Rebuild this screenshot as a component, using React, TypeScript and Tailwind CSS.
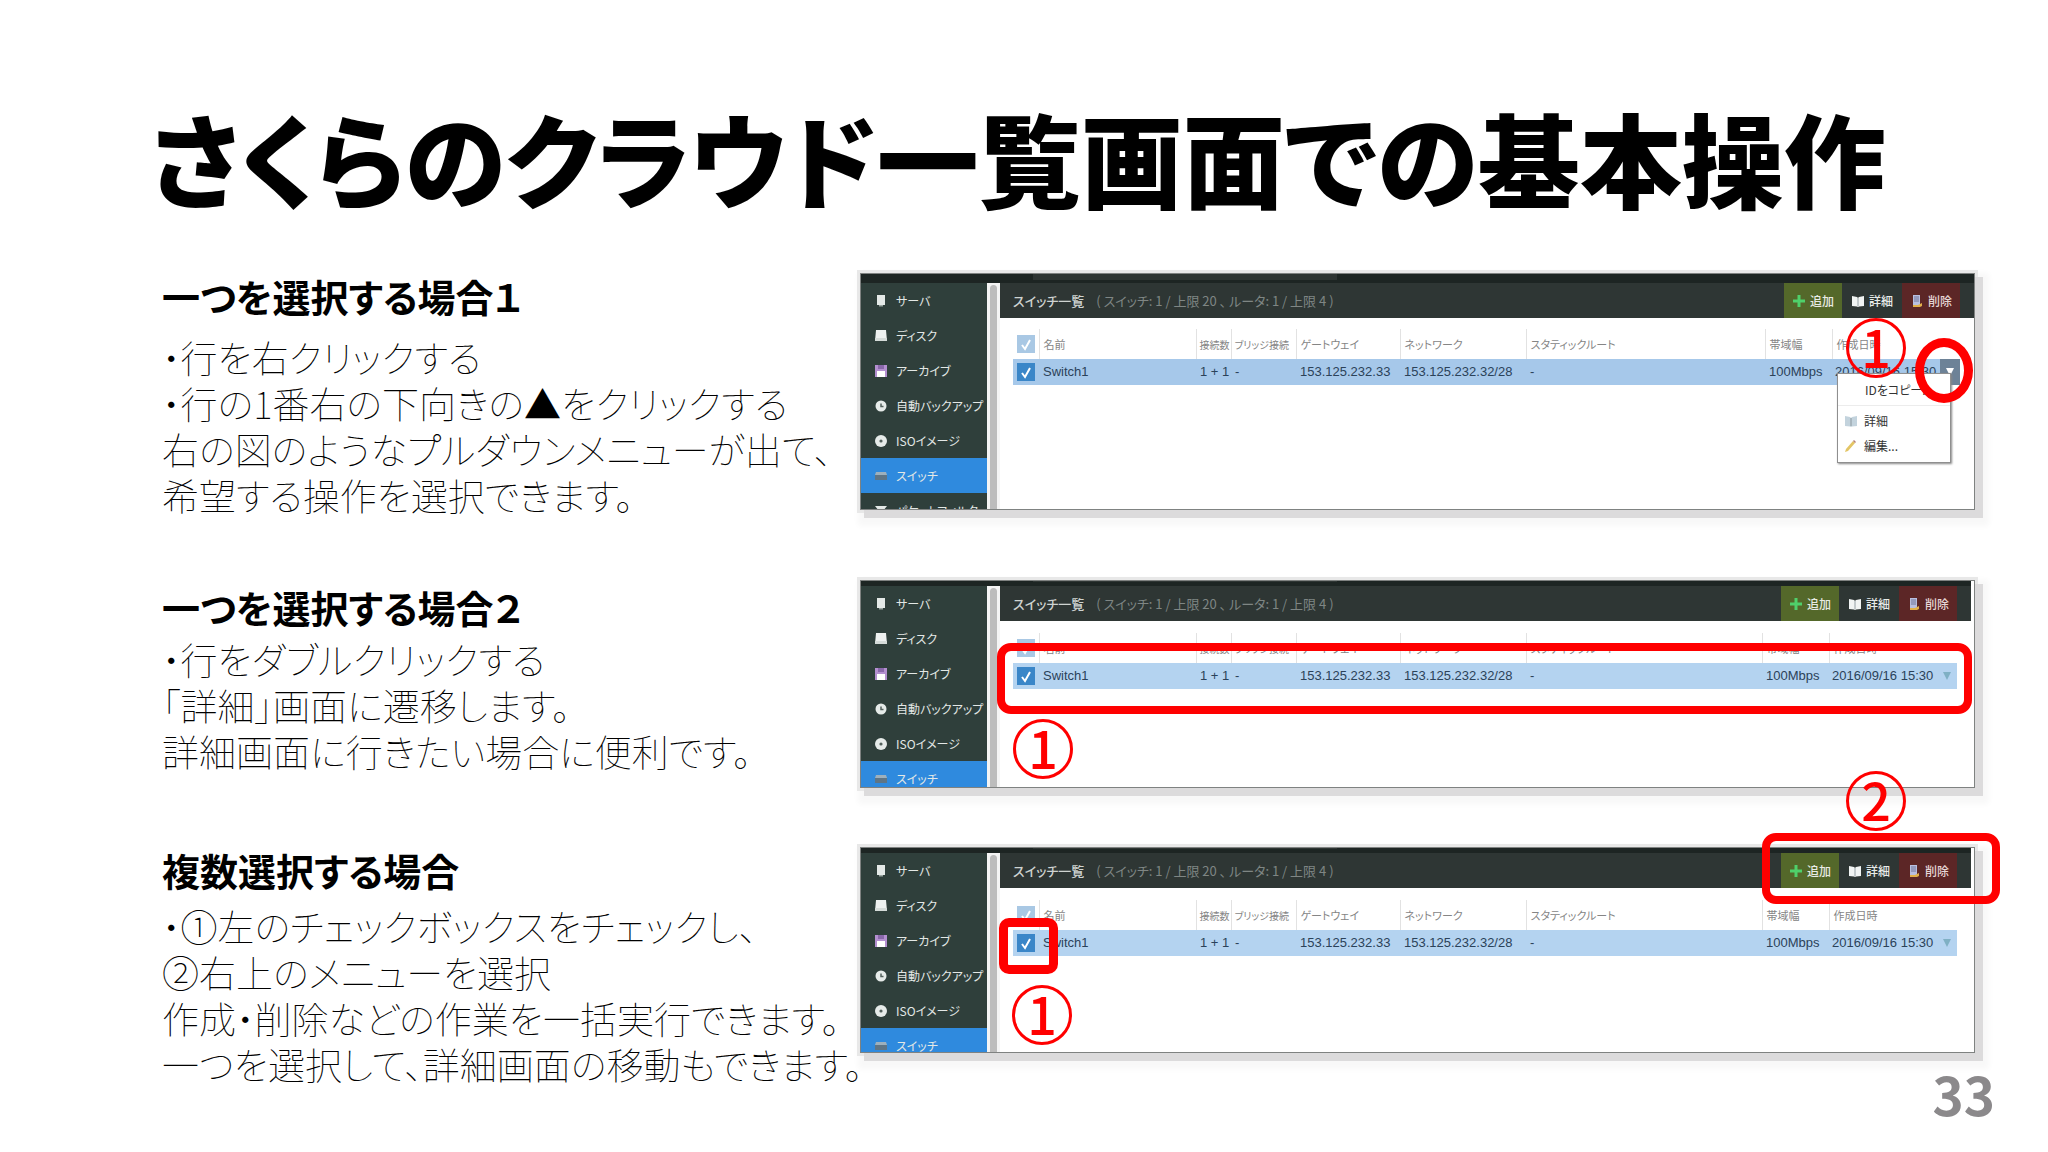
import type { ReactNode } from "react";

const sideItems = [
  { label: "サーバ", icon: "server" },
  { label: "ディスク", icon: "disk" },
  { label: "アーカイブ", icon: "archive" },
  { label: "自動バックアップ", icon: "backup" },
  { label: "ISOイメージ", icon: "iso" },
  { label: "スイッチ", icon: "switch" },
  { label: "パケットフィルタ", icon: "filter" },
];

function SideIcon({ name }: { name: string }) {
  return (
    <svg viewBox="0 0 14 14" className="w-3.5 h-3.5 shrink-0" aria-hidden="true">
      {name === "server" && (
        <g>
          <rect x="3" y="1" width="8" height="10" fill="#e4e9e7" />
          <rect x="5" y="11" width="4" height="1.5" fill="#9aa5a1" />
        </g>
      )}
      {name === "disk" && (
        <g>
          <path d="M2 1h10l1 11H1z" fill="#eef1f0" />
          <path d="M1 9h12v3H1z" fill="#d5dbd9" />
        </g>
      )}
      {name === "archive" && (
        <g>
          <rect x="1" y="1" width="12" height="12" fill="#b48fd0" />
          <rect x="4" y="1" width="6" height="4" fill="#8a68ab" />
          <rect x="3" y="7" width="8" height="6" fill="#fff" />
        </g>
      )}
      {name === "backup" && (
        <g>
          <circle cx="7" cy="7" r="5.5" fill="#e6ebe9" />
          <path d="M7 4.5v3h2.5" stroke="#53605c" strokeWidth="1.5" fill="none" />
        </g>
      )}
      {name === "iso" && (
        <g>
          <circle cx="7" cy="7" r="6" fill="#e6ebe9" />
          <circle cx="7" cy="7" r="1.6" fill="#53605c" />
        </g>
      )}
      {name === "switch" && (
        <g>
          <path d="M2 3h10l1 3H1z" fill="#9db0bd" />
          <rect x="1" y="6" width="12" height="5" fill="#5f7585" />
        </g>
      )}
      {name === "filter" && <path d="M1 2h12L9 7v5H5V7z" fill="#e4e9e7" />}
    </svg>
  );
}

function PlusIcon() {
  return (
    <svg viewBox="0 0 14 14" className="w-3.5 h-3.5" aria-hidden="true">
      <path d="M5.5 1h3v4.5H13v3H8.5V13h-3V8.5H1v-3h4.5z" fill="#4fd06a" />
    </svg>
  );
}

function BookIcon({ color }: { color: string }) {
  return (
    <svg viewBox="0 0 14 14" className="w-3.5 h-3.5" aria-hidden="true">
      <path d="M1 2l5 1 1 1 1-1 5-1v10l-5 .5-1 .5-1-.5L1 12z" fill={color} />
      <path d="M7 4v8" stroke="#7d8b90" strokeWidth="0.8" />
    </svg>
  );
}

function TrashIcon() {
  return (
    <svg viewBox="0 0 14 14" className="w-3.5 h-3.5" aria-hidden="true">
      <rect x="3" y="1" width="7" height="10" fill="#b9bfe0" />
      <path d="M4 3h5M4 5h5M4 7h5" stroke="#5b6288" strokeWidth="0.8" />
      <path d="M3 11h5l4-2v3l-2 1H3z" fill="#e2b04a" />
    </svg>
  );
}

function PencilIcon() {
  return (
    <svg viewBox="0 0 14 14" className="w-3.5 h-3.5" aria-hidden="true">
      <path d="M1 13l1-3 7-8 2 2-7 8z" fill="#e3c565" />
      <path d="M9 2l1-1 2 2-1 1z" fill="#b57f78" />
    </svg>
  );
}

function Check({ label, dim }: { label: string; dim?: boolean }) {
  return (
    <span className="relative block w-[18px] h-[18px]">
      <input
        type="checkbox"
        aria-label={label}
        defaultChecked
        className={`block appearance-none w-[18px] h-[18px] ${dim ? "bg-[#a9c8e4]" : "bg-[#3a86c8]"}`}
      />
      <svg viewBox="0 0 18 18" className="absolute inset-0 pointer-events-none" aria-hidden="true">
        <path d="M5 10l3 4 5-9" stroke="#fff" strokeWidth="2" fill="none" />
      </svg>
    </span>
  );
}

const heads = ["名前", "接続数", "ブリッジ接続", "ゲートウェイ", "ネットワーク", "スタティックルート", "帯域幅", "作成日時"];
const cells = ["Switch1", "1 + 1", "-", "153.125.232.33", "153.125.232.32/28", "-", "100Mbps"];

type PanelProps = { tall?: boolean; height: string; children: ReactNode };

function Panel({ tall, height, children }: PanelProps) {
  return (
    <div className="relative">
      <div
        className={`flex flex-col overflow-hidden border border-[#7f8281] bg-white text-[13px] shadow-[6px_6px_0_2px_#dcdbdc,0_0_0_3px_#e8e8e8,6px_8px_6px_8px_#f8f8f8] ${height}`}
      >
        <div className={`shrink-0 bg-[#1d2523] ${tall ? "h-[9px]" : "h-[5px] mr-[3px]"}`}>
          <div className={`ml-[172px] w-[304px] bg-[#2e3533] ${tall ? "h-[6px]" : "h-px"}`} />
        </div>
        <div className="flex flex-1 min-h-0">
          <nav className="w-[126px] shrink-0 bg-[#2f3f3b] text-[12px]">
            {sideItems.map((item) => (
              <a
                key={item.label}
                href="#"
                className={`flex items-center gap-2 h-[35px] pl-[13px] whitespace-nowrap text-[#e3e8e6] ${item.icon === "switch" ? "bg-[#2f8ade]" : ""}`}
              >
                <SideIcon name={item.icon} />
                {item.label}
              </a>
            ))}
          </nav>
          <div className="w-[13px] shrink-0 bg-[#f4f4f4] pt-0.5 pl-[3px]">
            <div className="w-[7px] h-full rounded-t bg-[#bcbcbc]" />
          </div>
          <div className="flex-1 min-w-0">
            <div className={`flex items-center h-[35px] pl-[13px] pr-[14px] bg-[#2e3634] ${tall ? "" : "mr-[3px]"}`}>
              <h3 className="font-medium text-[#ced3d1]">スイッチ一覧</h3>
              <p className="ml-3 flex-1 text-[#7f8684]">( スイッチ: 1 / 上限 20 、 ルータ: 1 / 上限 4 )</p>
              <button className="flex items-center justify-center gap-1 w-[58px] h-full bg-[#54682a] text-[12px] font-medium text-[#e8ebe4]">
                <PlusIcon />
                追加
              </button>
              <button className="flex items-center justify-center gap-1 w-[60px] h-full text-[12px] font-medium text-[#e8ebe9]">
                <BookIcon color="#f1f4f3" />
                詳細
              </button>
              <button className="flex items-center justify-center gap-1 w-[58px] h-full bg-[#5c2626] text-[12px] font-medium text-[#e6d6d6]">
                <TrashIcon />
                削除
              </button>
            </div>
            <div className={`pl-[13px] ${tall ? "pt-[11px] pr-[14px]" : "pt-3 pr-[17px]"}`}>
              <table className="w-full table-fixed border-collapse text-left whitespace-nowrap">
                <colgroup>
                  <col className="w-[26px]" />
                  <col className="w-[157px]" />
                  <col className="w-[35px]" />
                  <col className="w-[65px]" />
                  <col className="w-[104px]" />
                  <col className="w-[126px]" />
                  <col />
                  <col className="w-[67px]" />
                  <col className="w-[128px]" />
                </colgroup>
                <thead>
                  <tr className="h-[30px] text-[11px] text-[#858585]">
                    <th className="pl-1 font-normal">
                      <Check label="すべて選択" dim />
                    </th>
                    {heads.map((h) => (
                      <th
                        key={h}
                        className={`border-l border-[#e2e2e2] font-normal ${h.includes("接続") ? "pl-[3px] text-[10px]" : "pl-1"}`}
                      >
                        {h}
                      </th>
                    ))}
                  </tr>
                </thead>
                <tbody>
                  <tr className={`h-[26px] text-[#2b4259] ${tall ? "bg-[#a6c8ea]" : "bg-[#b4d3f0]"}`}>
                    <td className="pl-1">
                      <Check label="Switch1" />
                    </td>
                    {cells.map((c, i) => (
                      <td key={i} className="pl-1 font-['Liberation_Sans',sans-serif]">
                        {c}
                      </td>
                    ))}
                    <td className="pl-[3px] font-['Liberation_Sans',sans-serif]">
                      <div className="flex items-center justify-between">
                        2016/09/16 15:30
                        <button
                          aria-label="メニュー"
                          className={`flex items-center justify-center w-5 h-[26px] ${tall ? "bg-[#6d8297] text-white" : "text-[#7fb0c4]"}`}
                        >
                          <svg viewBox="0 0 10 10" className="w-2.5 h-2.5" aria-hidden="true">
                            <path d="M1 1h8L5 9z" fill="currentColor" />
                          </svg>
                        </button>
                      </div>
                    </td>
                  </tr>
                </tbody>
              </table>
            </div>
          </div>
        </div>
      </div>
      {children}
    </div>
  );
}

function Mark({ children, place }: { children: string; place: string }) {
  return (
    <span
      className={`absolute flex items-center justify-center w-[60px] h-[60px] pb-1 rounded-full border-[3px] border-[#ff0000] text-[52px] leading-[52px] font-medium text-[#ff0000] ${place}`}
    >
      {children}
    </span>
  );
}

function Section({ title, lines, pad, gap, children }: { title: string; lines: string[]; pad: string; gap: string; children: ReactNode }) {
  return (
    <section className="grid grid-cols-[698px_1fr]">
      <div className={`whitespace-nowrap ${pad}`}>
        <h2 className="text-[38px] leading-[46px] font-bold">{title}</h2>
        <p className={`text-[37px] leading-[46px] font-thin ${gap}`}>
          {lines.map((line) => (
            <span key={line} className="block">
              {line}
            </span>
          ))}
        </p>
      </div>
      <div>{children}</div>
    </section>
  );
}

export default function App() {
  return (
    <main
      lang="ja"
      className="bg-white text-black pl-[162px] pr-[73px] pt-[82px] font-['Noto_Sans_CJK_JP',sans-serif] [font-kerning:normal] [font-feature-settings:'palt','kern']"
    >
      <h1 className="-ml-3 text-[102px] leading-[150px] font-black whitespace-nowrap">さくらのクラウド一覧画面での基本操作</h1>
      <div className="mt-[41px] flex flex-col gap-[59px]">
        <Section
          title="一つを選択する場合１"
          pad="pb-[3px]"
          gap="mt-[15px]"
          lines={[
            "・行を右クリックする",
            "・行の1番右の下向きの▲をクリックする",
            "右の図のようなプルダウンメニューが出て、",
            "希望する操作を選択できます。",
          ]}
        >
          <Panel tall height="h-[237px]">
            <ul className="absolute right-[24px] top-[100px] w-[114px] h-[90px] border border-[#8f8f8f] bg-white text-[12px] text-[#333] shadow-[1px_1px_2px_#888]">
              <li className="h-[32px] pl-[27px] leading-[32px] border-b border-[#ececec]">
                <button>IDをコピー...</button>
              </li>
              <li className="mt-0.5">
                <button className="flex items-center gap-[6px] h-[25px] pl-[6px]">
                  <BookIcon color="#c3d3dd" />
                  詳細
                </button>
              </li>
              <li>
                <button className="flex items-center gap-[6px] h-[25px] pl-[6px]">
                  <PencilIcon />
                  編集...
                </button>
              </li>
            </ul>
            <Mark place="right-[69px] top-[45px]">1</Mark>
            <div className="absolute right-[2px] top-[65px] w-[58px] h-[65px] rounded-[50%] border-[9px] border-[#ff0000]" />
          </Panel>
        </Section>
        <Section
          title="一つを選択する場合２"
          pad="pt-1"
          gap="mt-[6px]"
          lines={["・行をダブルクリックする", "「詳細」画面に遷移します。", "詳細画面に行きたい場合に便利です。"]}
        >
          <Panel height="h-[208px]">
            <div className="absolute left-[137px] right-[3px] top-[63px] h-[71px] rounded-[14px] border-8 border-[#ff0000]" />
            <Mark place="left-[153px] top-[139px]">1</Mark>
          </Panel>
        </Section>
        <Section
          title="複数選択する場合"
          pad="pt-0"
          gap="mt-2.5"
          lines={[
            "・①左のチェックボックスをチェックし、",
            "②右上のメニューを選択",
            "作成・削除などの作業を一括実行できます。",
            "一つを選択して、詳細画面の移動もできます。",
          ]}
        >
          <Panel height="h-[206px]">
            <div className="absolute left-[139px] top-[71px] w-[59px] h-[56px] rounded-[10px] border-[9px] border-[#ff0000]" />
            <Mark place="left-[152px] top-[138px]">1</Mark>
            <div className="absolute -right-[25px] -top-[14px] w-[238px] h-[71px] rounded-[14px] border-8 border-[#ff0000]" />
            <Mark place="right-[69px] -top-[76px]">2</Mark>
          </Panel>
          <p className="mt-3 -mr-5 text-right text-[53px] leading-[56px] font-bold text-[#8b898b]">33</p>
        </Section>
      </div>
    </main>
  );
}
